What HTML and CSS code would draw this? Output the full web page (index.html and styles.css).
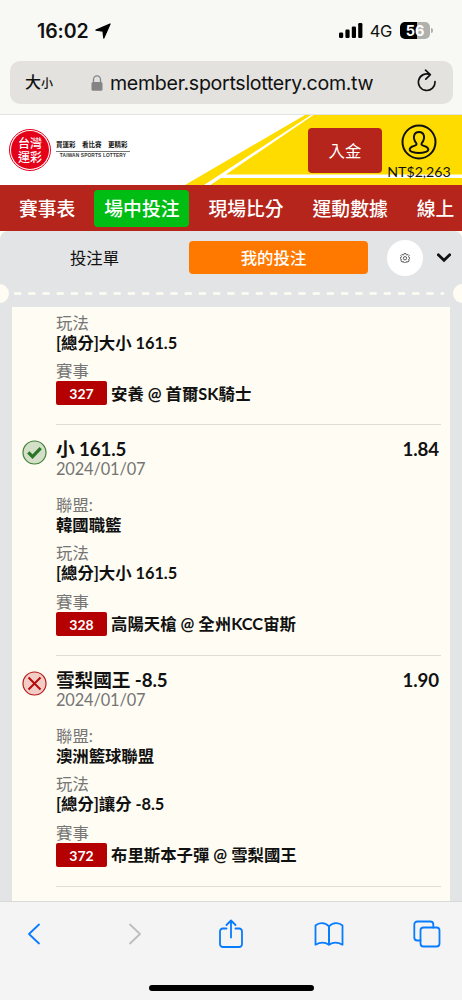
FILE: index.html
```html
<!DOCTYPE html>
<html lang="zh-Hant">
<head>
<meta charset="utf-8">
<meta name="viewport" content="width=device-width, initial-scale=1">
<title>台灣運彩</title>
<link rel="stylesheet" href="styles.css">
</head>
<body>
<div class="phone">
  <div class="browser-top">
    <div class="status">
      <span class="clock">16:02</span>
      <svg class="locate" width="16" height="16" viewBox="0 0 16 16"><path d="M15 1 1 7.200 8 8l.8 7z" stroke="#000" stroke-width="1.300" stroke-linejoin="round"/></svg>
      <svg class="signal" width="24" height="15" viewBox="0 0 24 15"><rect x="0" y="9.500" width="4.200" height="5.500" rx="1.200"/><rect x="6.400" y="6.500" width="4.200" height="8.500" rx="1.200"/><rect x="12.800" y="3.500" width="4.200" height="11.500" rx="1.200"/><rect x="19.200" y="0" width="4.200" height="15" rx="1.200"/></svg>
      <span class="network">4G</span>
      <span class="battery">56</span><i class="battery-tip"></i>
    </div>
    <div class="address">
      <span class="reader">大<small>小</small></span>
      <svg class="lock" width="12" height="16" viewBox="0 0 12 16"><path d="M2.500 8V4.500a3.500 3.700 0 0 1 7 0V8" fill="none" stroke="#848487" stroke-width="1.300"/><rect x=".5" y="7" width="11" height="8.700" rx="1.500" fill="#848487"/></svg>
      <span class="url">member.sportslottery.com.tw</span>
      <svg class="reload" width="20" height="24" viewBox="0 0 20 24"><path d="M13.300 5.700A8.300 8.300 0 1 0 18 12.600M8.500 1.200l4.800 4.400-4.500 4.600" fill="none" stroke="#111" stroke-width="1.700" stroke-linecap="round" stroke-linejoin="round"/></svg>
    </div>
  </div>

  <header class="header">
    <svg class="stripes" width="462" height="70" viewBox="0 0 462 70"><path d="M305 0H462V70H185z" fill="#ffdc00"/><path d="M311 0h2.500L210.500 70H204zM223.500 59.500H462V63H218z" fill="#fff"/></svg>
    <div class="seal"><div><span>台灣</span><span>運彩</span></div></div>
    <div class="slogan"><b>買運彩</b><b>看比賽</b><b>更精彩</b><em>TAIWAN SPORTS LOTTERY</em></div>
    <button class="deposit">入金</button>
    <div class="account">
      <svg width="36" height="36" viewBox="0 0 36 36" fill="none" stroke="#111"><circle cx="18" cy="18" r="16.500" stroke-width="2"/><path d="M15.200 19C11 13.500 13 8 18 8s7 5.500 2.800 11c-.9 1.600 0 2.400 2.700 3.100 4.500 1.200 5 4.600 1.400 5.800-4 1.300-9.800 1.300-13.800 0-3.600-1.200-3.100-4.600 1.400-5.800 2.700-.7 3.600-1.500 2.700-3.100z" stroke-width="2"/></svg>
      <span>NT$2,263</span>
    </div>
  </header>

  <nav class="nav"><a>賽事表</a><a class="active">場中投注</a><a>現場比分</a><a>運動數據</a><a>線上</a></nav>

  <main class="panel">
    <div class="tabs">
      <span class="tab">投注單</span>
      <span class="tab selected">我的投注</span>
      <span class="gear"><svg width="10" height="10" viewBox="0 0 20 20" fill="none" stroke="#555" stroke-width="1.900"><path d="M8.300 1h3.400l.6 2.400 1.500.6 2.200-1.200 2.300 2.300L17 7.200l.6 1.500 2 .6v2.400l-2 .6-.6 1.500 1.300 2.100-2.300 2.300-2.200-1.200-1.500.6-.6 2.400H8.300l-.6-2.400-1.500-.6L4 18.200l-2.300-2.300L3 13.800l-.6-1.500-2-.6V9.300l2-.6L3 7.200 1.700 5.100 4 2.800 6.200 4l1.500-.6z"/><circle cx="10" cy="10.500" r="3.300"/></svg></span>
      <svg class="chevron" width="14" height="10" viewBox="0 0 14 10"><path d="M1.300 1.800 7 7.300l5.700-5.500" fill="none" stroke="#111" stroke-width="2.800" stroke-linecap="round"/></svg>
    </div>
    <div class="perforation"><i></i><svg width="434" height="3" viewBox="0 0 434 3"><path d="M0 1.500H430" stroke="#fffdf3" stroke-width="2.400" stroke-dasharray="7.200 7.020"/></svg><i></i></div>
    <div class="ticket">
      <section class="bet first">
        <div class="label">玩法</div><div class="value">[總分]大小 161.5</div>
        <div class="label">賽事</div><div class="match"><b>327</b>安養 @ 首爾SK騎士</div>
      </section>
      <section class="bet">
        <svg class="result" width="25" height="25" viewBox="0 0 25 25"><circle cx="12.500" cy="12.500" r="11.500" fill="#d3e0c7" stroke="#3f8138" stroke-width="1.200"/><path d="m6.300 12.300 4.200 4.300 8.200-8.400" fill="none" stroke="#2b7526" stroke-width="3.200"/></svg>
        <div class="title"><span>小 161.5</span><span>1.84</span></div><div class="date">2024/01/07</div>
        <div class="label">聯盟:</div><div class="value">韓國職籃</div>
        <div class="label">玩法</div><div class="value">[總分]大小 161.5</div>
        <div class="label">賽事</div><div class="match"><b>328</b>高陽天槍 @ 全州KCC宙斯</div>
      </section>
      <section class="bet">
        <svg class="result" width="25" height="25" viewBox="0 0 25 25"><circle cx="12.500" cy="12.500" r="11.500" fill="#f3ccc5" stroke="#b51b1b" stroke-width="1.200"/><path d="m6.500 6.500 12 12m0-12-12 12" fill="none" stroke="#b60b0b" stroke-width="2"/></svg>
        <div class="title"><span>雪梨國王 -8.5</span><span>1.90</span></div><div class="date">2024/01/07</div>
        <div class="label">聯盟:</div><div class="value">澳洲籃球聯盟</div>
        <div class="label">玩法</div><div class="value">[總分]讓分 -8.5</div>
        <div class="label">賽事</div><div class="match"><b>372</b>布里斯本子彈 @ 雪梨國王</div>
      </section>
    </div>
  </main>

  <footer class="toolbar">
    <svg width="14" height="22" viewBox="0 0 14 22"><path d="M12 1.500 2 11l10 9.500"/></svg>
    <svg class="disabled" width="14" height="22" viewBox="0 0 14 22"><path d="m2 1.500 10 9.500-10 9.500"/></svg>
    <svg width="24" height="30" viewBox="0 0 24 30"><path d="M7.500 9.500H4A2.800 2.800 0 0 0 1 12.300v13A2.800 2.800 0 0 0 4 28h16a2.800 2.800 0 0 0 3-2.700v-13a2.800 2.800 0 0 0-3-2.800h-3.500M12 18.500V1.500M7.500 6 12 1.500 16.500 6"/></svg>
    <svg width="30" height="25" viewBox="0 0 30 25"><path d="M15 4.500C11 .2 5 .4 1.500 3.500v19.200c4-2.300 9.500-2.600 13.500 0 4-2.600 9.500-2.300 13.500 0V3.500C25 .4 19 .2 15 4.500zv18"/><path d="M15 4.500v18"/></svg>
    <svg width="28" height="28" viewBox="0 0 28 28"><rect x="7.500" y="7.500" width="19" height="19" rx="3"/><path d="M7.500 20.500H4.300a3 3 0 0 1-3-3V4.500a3 3 0 0 1 3-3h13a3 3 0 0 1 3 3v3"/></svg>
    <i class="home"></i>
  </footer>
</div>
</body>
</html>
```
FILE: styles.css
```css
* { box-sizing: border-box; }
body { margin: 0; font-family: Lato, "Noto Sans CJK TC", sans-serif; color: #111; }
svg { display: block; flex: none; }
.phone { width: 462px; height: 1000px; overflow: hidden; display: flex; flex-direction: column; background: #fffdf3; }
.browser-top { height: 115px; flex: none; background: #f8f8f4; border-bottom: 1px solid #e2e2df; font-family: Inter, "Noto Sans CJK TC", sans-serif; }
.status { height: 61px; padding: 0 31px 0 37px; display: flex; align-items: center; }
.clock { font-size: 19.500px; font-weight: 600; letter-spacing: -.1px; }
.locate { margin-left: 7px; }
.signal { margin-left: auto; }
.network { margin-left: 7px; font-size: 16.500px; letter-spacing: -.3px; }
.battery { margin-left: 8px; width: 30px; height: 17px; border-radius: 5px; background: linear-gradient(90deg, #000 56%, #b0b0ad 56%); color: #fff; font-size: 14.500px; font-weight: 700; line-height: 17px; text-align: center; }
.battery-tip { width: 2px; height: 5px; margin-left: 1px; margin-right: -2px; border-radius: 0 2px 2px 0; background: #b0b0ad; }
.address { height: 43px; margin: 0 9px 0 10px; padding: 0 16px 0 15px; border-radius: 10px; background: #e3e2df; display: flex; align-items: center; }
.reader { width: 66px; font-size: 16px; font-weight: 500; line-height: 24px; }
.reader small { font-size: 12px; }
.url { margin-left: 7px; font-size: 19.600px; letter-spacing: -.3px; white-space: nowrap; }
.reload { margin-left: auto; margin-top: -3px; }

.header { height: 70px; flex: none; position: relative; display: flex; align-items: flex-start; background: #fff; }
.stripes { position: absolute; inset: 0; }
.seal { margin: 14px 0 0 9px; width: 42px; height: 42px; padding: 1px; border: 1px solid #e50019; border-radius: 50%; position: relative; }
.seal div { display: flex; flex-direction: column; align-items: center; justify-content: center; height: 38px; border-radius: 50%; background: #e50019; color: #fff; font-family: "Noto Sans CJK TC", sans-serif; font-size: 12px; font-weight: 500; line-height: 14px; }
.seal span { height: 14px; }
.slogan { margin: 24px 0 0 5px; width: 74px; position: relative; display: grid; grid-template-columns: auto auto auto; justify-content: space-between; font-size: 6.500px; line-height: 12px; }
.slogan em { grid-column: 1 / 4; border-top: 1px solid #777; font-style: normal; font-family: "Liberation Sans", sans-serif; font-size: 4.800px; line-height: 8px; font-weight: 700; text-align: center; letter-spacing: .15px; white-space: nowrap; color: #333; }
.deposit { position: relative; margin: 13px 0 0 178px; width: 74px; height: 45px; border: 0; border-radius: 4px; background: #b5251b; color: #fff; font: 16.400px/45px Lato, "Noto Sans CJK TC", sans-serif; padding: 0; }
.account { position: relative; margin: 9px 0 0 5px; width: 64px; display: flex; flex-direction: column; align-items: center; font-size: 14.200px; line-height: 18px; }
.account span { margin-top: 3px; }

.nav { height: 46px; flex: none; display: flex; align-items: center; background: #b5251b; color: #fff; font-size: 18.800px; font-weight: 500; white-space: nowrap; padding-left: 9px; gap: 9px; }
.nav a { height: 37px; line-height: 38px; padding: 0 10px; border-radius: 4px; }
.nav .active { background: #00bd13; }

.panel { height: 670px; flex: none; background: #e3e4e6; border-radius: 8px 8px 0 0; overflow: hidden; }
.tabs { height: 53px; display: flex; align-items: center; }
.tab { width: 189px; height: 33px; border-radius: 4px; text-align: center; font-size: 16.400px; line-height: 33px; }
.tab.selected { width: 179px; padding-right: 10px; background: #ff7900; color: #fff; font-weight: 500; }
.gear { width: 36px; height: 36px; margin-left: 19px; border-radius: 50%; background: #fff; display: grid; place-items: center; }
.chevron { margin-left: 14px; }
.perforation { height: 19px; margin: 0 -10px; display: flex; align-items: center; justify-content: space-between; }
.perforation i { width: 19px; height: 19px; border-radius: 50%; background: #fffdf3; }
.ticket { height: 594px; margin: 4px 12px 0; background: #fffdf3; overflow: hidden; }
.bet { height: 231px; margin: 0 9px 0 44px; border-bottom: 1px solid #dfddd8; position: relative; font-size: 16.400px; padding-top: 13px; white-space: nowrap; }
.bet.first { height: 118px; padding-top: 4.500px; }
.result { position: absolute; left: -34px; top: 15px; }
.title { height: 21px; display: flex; justify-content: space-between; padding-right: 2px; font-size: 18.700px; line-height: 22px; font-weight: 700; letter-spacing: -.1px; }
.date { height: 20px; font-size: 16.400px; line-height: 20px; color: #757575; margin-bottom: 14.500px; letter-spacing: -.15px; }
.label { height: 21px; line-height: 22px; color: #757575; }
.value { height: 19px; line-height: 19px; font-weight: 700; margin-bottom: 8.600px; letter-spacing: -.05px; }
.match { height: 24px; display: flex; align-items: center; font-weight: 700; line-height: 25px; }
.match b { width: 51px; height: 24px; margin-right: 4px; border-radius: 2px; background: #b40000; color: #fff; text-align: center; font-size: 14px; font-weight: 700; }

.toolbar { height: 99px; flex: none; position: relative; display: flex; align-items: center; padding: 0 22px 34px 27px; background: #f4f4f4; border-top: 1px solid #dadada; }
.toolbar svg { fill: none; stroke: #087cff; stroke-width: 1.800; stroke-linecap: round; stroke-linejoin: round; }
.toolbar svg.disabled { stroke: #bdbdbd; margin-left: 87px; margin-right: 77px; }
.toolbar svg:nth-of-type(4) { margin-left: 71px; margin-right: 69px; }
.home { position: absolute; left: 149px; top: 83px; width: 165px; height: 6px; border-radius: 3px; background: #000; }
```
